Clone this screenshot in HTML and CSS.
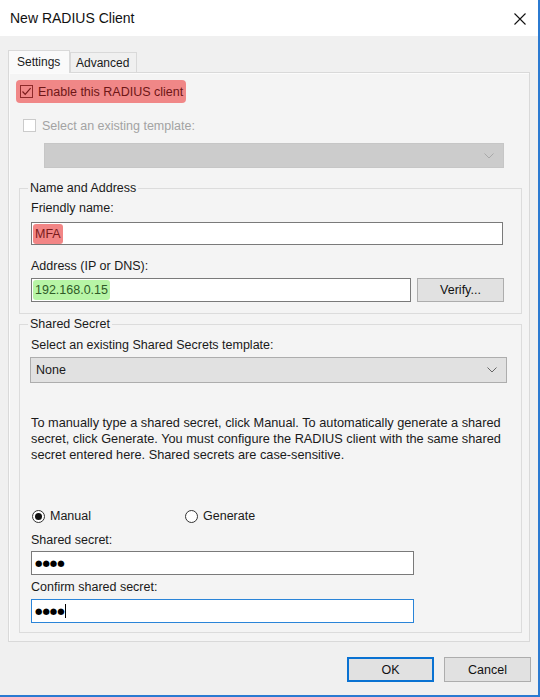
FILE: index.html
```html
<!DOCTYPE html>
<html>
<head>
<meta charset="utf-8">
<link rel="stylesheet" href="styles.css">
</head>
<body>
<div class="window">
  <div class="titlebar">
    <span class="title">New RADIUS Client</span>
    <svg class="close" width="12" height="12" viewBox="0 0 12 12"><path d="M0.5 0.5 L11.5 11.5 M11.5 0.5 L0.5 11.5" stroke="#111" stroke-width="1.1" fill="none"/></svg>
  </div>
  <div class="body">
    <div class="tabs">
      <div class="tab active">Settings</div>
      <div class="tab">Advanced</div>
    </div>
    <div class="panel">
      <div class="enable">
        <span class="cb cb-red"><svg width="11" height="11" viewBox="0 0 11 11"><path d="M1.5 5.5 L4.2 8.3 L9.6 2.2" stroke="#7a1c1c" stroke-width="1.2" fill="none"/></svg></span>
        <span class="enable-text">Enable this RADIUS client</span>
      </div>
      <div class="tmpl">
        <span class="cb cb-disabled"></span>
        <span class="muted">Select an existing template:</span>
      </div>
      <div class="combo combo-disabled">
        <svg class="chev" width="10" height="6" viewBox="0 0 10 6"><path d="M0.5 0.5 L5 5 L9.5 0.5" stroke="#a9a9a9" stroke-width="1" fill="none"/></svg>
      </div>

      <fieldset class="group group-name">
        <legend>Name and Address</legend>
        <div class="label first">Friendly name:</div>
        <div class="field field-name"><span class="hl hl-red">MFA</span></div>
        <div class="label label-addr">Address (IP or DNS):</div>
        <div class="addr-row">
          <div class="field field-addr"><span class="hl hl-green">192.168.0.15</span></div>
          <div class="btn btn-verify">Verify...</div>
        </div>
      </fieldset>

      <fieldset class="group group-secret">
        <legend>Shared Secret</legend>
        <div class="label first">Select an existing Shared Secrets template:</div>
        <div class="combo combo-none">
          <span>None</span>
          <svg class="chev" width="10" height="6" viewBox="0 0 10 6"><path d="M0.5 0.5 L5 5 L9.5 0.5" stroke="#666" stroke-width="1" fill="none"/></svg>
        </div>
        <p class="desc">To manually type a shared secret, click Manual. To automatically generate a shared<br>secret, click Generate. You must configure the RADIUS client with the same shared<br>secret entered here. Shared secrets are case-sensitive.</p>
        <div class="radios">
          <div class="radio-item radio-manual"><span class="radio checked"><span class="dot"></span></span><span>Manual</span></div>
          <div class="radio-item"><span class="radio"></span><span>Generate</span></div>
        </div>
        <div class="label label-secret">Shared secret:</div>
        <div class="field field-secret"><span class="dots">●●●●</span></div>
        <div class="label label-confirm">Confirm shared secret:</div>
        <div class="field field-secret field-focus"><span class="dots">●●●●</span><span class="caret"></span></div>
      </fieldset>
    </div>
    <div class="footer">
      <div class="btn btn-ok">OK</div>
      <div class="btn btn-cancel">Cancel</div>
    </div>
  </div>
</div>
</body>
</html>
```

FILE: styles.css
```css
* { box-sizing: border-box; }
html, body { margin: 0; padding: 0; }
body {
  font-family: "Liberation Sans", Arial, sans-serif;
  font-size: 12.5px;
  color: #1a1a1a;
  background: #f0f0f0;
}
.window {
  width: 540px;
  height: 697px;
  background: #f0f0f0;
  border-right: 2px solid #2b7ad1;
  border-bottom: 2px solid #2b7ad1;
  display: flex;
  flex-direction: column;
}
.titlebar {
  height: 36px;
  background: #fff;
  display: flex;
  align-items: center;
  justify-content: space-between;
  padding: 0 12px 0 10px;
  flex: none;
}
.title { font-size: 14px; color: #111; margin-top: -1px; }
.close { margin-top: 1px; }
.body {
  flex: 1;
  padding: 14px 0 0 8px;
}
.tabs {
  display: flex;
  align-items: flex-end;
  height: 22px;
  position: relative;
  z-index: 1;
}
.tab {
  height: 20px;
  width: 67px;
  border: 1px solid #d9d9d9;
  border-bottom: none;
  background: #f0f0f0;
  padding-left: 5px;
  line-height: 20px;
  margin-left: -1px;
  font-size: 12px;
}
.tab.active {
  height: 23px;
  width: 62px;
  margin-left: 0;
  margin-bottom: -1px;
  background: #fafafa;
  padding-left: 8px;
  line-height: 22px;
  margin-right: 1px;
}
.panel {
  width: 522px;
  height: 570px;
  border: 1px solid #d9d9d9;
  background: #f4f4f4;
  box-shadow: inset 1px 1px 0 #fbfbfb;
  display: flex;
  flex-direction: column;
  align-items: flex-start;
}
.enable {
  margin: 7px 0 0 7px;
  height: 23px;
  background: #f08787;
  border-radius: 4px;
  display: flex;
  align-items: center;
  padding: 0 3px 0 4px;
  gap: 5px;
}
.enable-text { color: #6e1616; }
.cb {
  width: 13px;
  height: 13px;
  display: inline-flex;
  align-items: center;
  justify-content: center;
  flex: none;
}
.cb-red { border: 1px solid #8e2a2a; }
.cb-disabled { border: 1px solid #cbcbcb; background: #fff; }
.tmpl {
  margin: 15px 0 0 14px;
  height: 15px;
  display: flex;
  align-items: center;
  gap: 6px;
}
.muted { color: #a3a3a3; }
.combo {
  height: 25px;
  display: flex;
  align-items: center;
  justify-content: space-between;
  padding: 0 9px 0 5px;
}
.combo-disabled {
  margin: 10px 0 0 35px;
  width: 460px;
  background: #cccccc;
  border: 1px solid #c6c6c6;
  justify-content: flex-end;
}
.group {
  margin: 0 0 0 10px;
  width: 503px;
  border: 1px solid #dcdcdc;
  padding: 0 11px 11px 11px;
  min-width: 0;
}
.group legend {
  padding: 0 2px;
  margin-left: -3px;
  line-height: 15px;
}
.group-name { margin-top: 13px; }
.label { line-height: 15px; height: 15px; }
.label.first { margin-top: 5px; }
.field {
  background: #fff;
  border: 1px solid #7a7a7a;
  height: 23px;
  display: flex;
  align-items: center;
  padding-left: 1px;
}
.field-name { margin-top: 6px; width: 472px; }
.label-addr { margin-top: 14px; }
.addr-row {
  margin-top: 4px;
  display: flex;
  gap: 6px;
}
.field-addr { width: 380px; height: 24px; }
.hl {
  display: inline-block;
  line-height: 20px;
  padding: 0 2px;
  border-radius: 3px;
}
.hl-red { background: #f28585; color: #7a1a1a; }
.hl-green { background: #b7f5a6; color: #2f5a27; }
.btn {
  background: #e1e1e1;
  border: 1px solid #adadad;
  display: flex;
  align-items: center;
  justify-content: center;
  color: #111;
}
.btn-verify { width: 87px; height: 24px; }
.group-secret { margin-top: 3px; padding-bottom: 9px; }
.group-secret .label.first { margin-top: 6px; }
.combo-none {
  margin: 4px 0 0 -1px;
  width: 477px;
  height: 26px;
  background: #e1e1e1;
  border: 1px solid #adadad;
}
.desc {
  margin: 32px 0 0 0;
  font-size: 12.75px;
  line-height: 16px;
  color: #1a1a1a;
  white-space: nowrap;
}
.radios {
  margin-top: 45px;
  height: 16px;
  display: flex;
  align-items: center;
}
.radio-item {
  display: flex;
  align-items: center;
  gap: 5px;
}
.radio-manual { width: 154px; padding-left: 1px; }
.radio {
  width: 13px;
  height: 13px;
  border-radius: 50%;
  border: 1px solid #333;
  background: #fff;
  display: inline-flex;
  align-items: center;
  justify-content: center;
}
.radio .dot {
  width: 7px;
  height: 7px;
  border-radius: 50%;
  background: #111;
}
.label-secret { margin-top: 9px; }
.field-secret { margin-top: 3px; width: 383px; height: 24px; padding-left: 3px; }
.label-confirm { margin-top: 5px; }
.field-focus { border-color: #2a84d8; margin-top: 4px; }
.dots {
  font-family: "DejaVu Sans", sans-serif;
  font-size: 8.5px;
  letter-spacing: 0;
  color: #000;
}
.caret {
  width: 1px;
  height: 14px;
  background: #000;
  margin-left: 0;
}
.footer {
  display: flex;
  justify-content: flex-end;
  gap: 10px;
  padding-right: 7px;
  margin-top: 15px;
}
.btn-ok, .btn-cancel { width: 87px; height: 25px; }
.btn-ok { border: 2px solid #0a72d2; }
```
